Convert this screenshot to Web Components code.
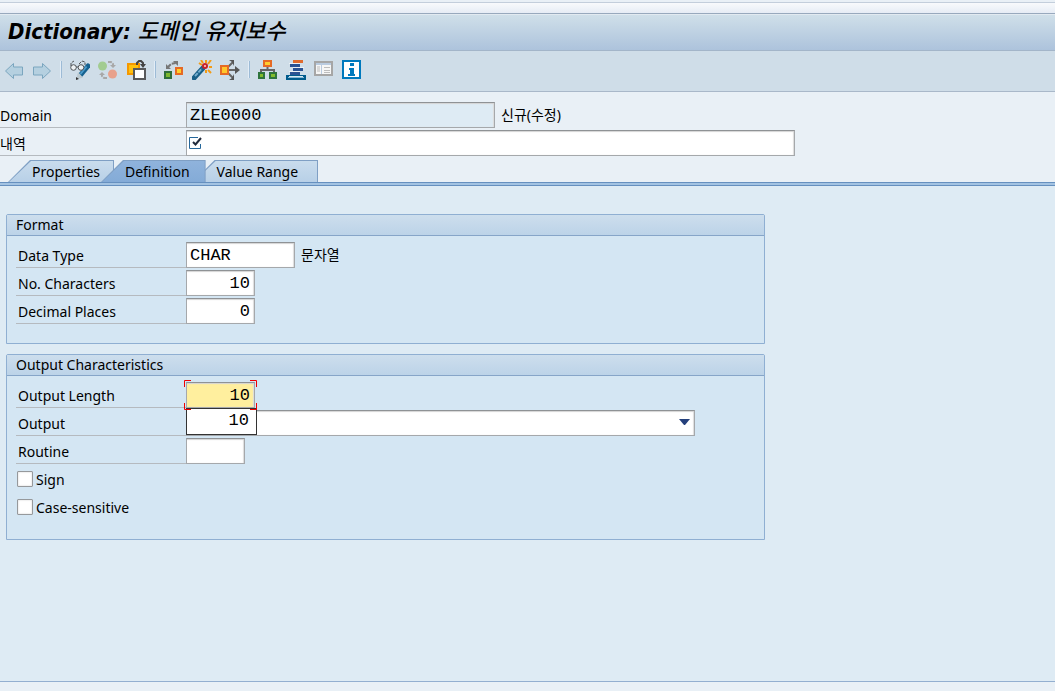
<!DOCTYPE html>
<html lang="ko">
<head>
<meta charset="utf-8">
<meta name="viewport" content="width=device-width, initial-scale=1">
<title>Dictionary: 도메인 유지보수</title>
<style>
  body {
    margin: 0;
    color: #000;
    font: 14px/20px "Noto Sans", "Noto Sans CJK KR", sans-serif;
  }
</style>
</head>
<body>
<app-window>
  <title-bar slot="top">Dictionary: <span>도메인 유지보수</span></title-bar>
  <tool-bar slot="top">
    <tool-button icon="back" label="Back" disabled></tool-button>
    <tool-button icon="forward" label="Forward" disabled></tool-button>
    <tool-separator></tool-separator>
    <tool-button icon="display" label="Display / Change"></tool-button>
    <tool-button icon="active" label="Active / Inactive" disabled></tool-button>
    <tool-button icon="other" label="Other Object"></tool-button>
    <tool-separator></tool-separator>
    <tool-button icon="check" label="Check"></tool-button>
    <tool-button icon="activate" label="Activate"></tool-button>
    <tool-button icon="where" label="Where-Used List"></tool-button>
    <tool-separator></tool-separator>
    <tool-button icon="tree" label="Display Object List"></tool-button>
    <tool-button icon="stack" label="Navigation Stack"></tool-button>
    <tool-button icon="table" label="Append"></tool-button>
    <tool-button icon="info" label="Help"></tool-button>
  </tool-bar>

  <form-head slot="top">
    <field-row label="Domain" value="ZLE0000" size="309" readonly note="신규(수정)"></field-row>
    <field-row label="내역" size="609" required></field-row>
  </form-head>
  <tab-strip slot="top">
    <tab-item style="--end: 14px">Properties</tab-item>
    <tab-item style="--end: 16px" selected>Definition</tab-item>
    <tab-item style="--end: 20px">Value Range</tab-item>
  </tab-strip>

  <group-box heading="Format">
    <field-row label="Data Type" value="CHAR" size="109" note="문자열"></field-row>
    <field-row label="No. Characters" value="10" size="69" numeric></field-row>
    <field-row label="Decimal Places" value="0" size="69" numeric></field-row>
  </group-box>
  <group-box heading="Output Characteristics">
    <field-row label="Output Length" value="10" size="69" numeric active suggest="10"></field-row>
    <field-row label="Output" size="509" dropdown></field-row>
    <field-row label="Routine" size="59"></field-row>
    <check-row label="Sign"></check-row>
    <check-row label="Case-sensitive"></check-row>
  </group-box>
</app-window>

<script>
const ICONS = {
  back: `<path d="M1.5 11 9.5 3.5V7H18.5V15H9.5V18.5Z" fill="#b5d0e0" stroke="#7ba6bf"/>`,
  forward: `<path d="M18.5 11 10.5 3.5V7H1.5V15H10.5V18.5Z" fill="#b5d0e0" stroke="#7ba6bf"/>`,
  display: `
    <path d="M18 6 10.500 15" stroke="#16618f" stroke-width="5" stroke-linecap="round"/>
    <path d="M16.500 6.500 10.500 14" stroke="#4a9aca" stroke-width="2"/>
    <path d="M8 12 6.500 19.500 13 17.500Z" fill="#bcc9d0"/><path d="M6 20V17L9 19Z" fill="#333"/>
    <g fill="#eef2f4" stroke="#4f5356"><circle cx="3.500" cy="7.500" r="2.800"/><circle cx="11" cy="7.500" r="2.800"/></g>
    <path d="M1 6V3L4 1M6 7H8M9 4 12 1 15 2V5" fill="none" stroke="#4f5356" stroke-dasharray="3 1"/>`,
  active: `
    <circle cx="4.500" cy="6" r="4.500" fill="#a2cc91"/><circle cx="14.500" cy="14" r="4.500" fill="#e8a18c"/>
    <g fill="none" stroke="#a8a8a8" stroke-width="2"><path d="M10 2H13L15 4V7M9 18H6L4 16V13" stroke-dasharray="4 1"/></g>
    <path d="M12 5H18L15 8ZM1 15H7L4 12Z" fill="#a8a8a8"/>`,
  other: `
    <rect x="2" y="4" width="11" height="10" fill="#ffc20f" stroke="#f59800" stroke-width="2"/>
    <rect x="8" y="9" width="11" height="10" fill="#fff" stroke="#58595b" stroke-width="2"/>
    <path d="M11 5V3L13 1H15L17 3V5" fill="none" stroke="#444" stroke-width="2"/>
    <path d="M14 4H20L17 8Z" fill="#444"/>`,
  check: `
    <rect x="1" y="12" width="6" height="6" fill="#7cb82f" stroke="#2f6e3b" stroke-width="2"/>
    <rect x="12" y="8" width="6" height="6" fill="#ffd02b" stroke="#e56a25" stroke-width="2"/>
    <path d="M4 7 7 4 12 3" fill="none" stroke="#777" stroke-width="2" stroke-dasharray="4 1"/>
    <path d="M2 4V9H7ZM9 1H14V6Z" fill="#777"/>`,
  activate: `
    <path d="M2 18 11 8" stroke="#185f87" stroke-width="5" stroke-linecap="round"/>
    <path d="M3 16 10 8.500" stroke="#75adce" stroke-width="2" stroke-dasharray="4 1"/>
    <path d="M9 0 11 3M14 0V3M19 0 16 4M17 7H20M16 10 19 13M7 3 10 5M14 10V13" stroke="#f39b16" stroke-width="2"/>
    <circle cx="13" cy="6" r="3" fill="#c8232c"/><path d="M12 5H14V7H12Z" fill="#f4aa9e"/>`,
  where: `
    <path d="M9 10H17M8 7 13 2M8 13 13 18" stroke="#666" stroke-width="2"/>
    <path d="M15 6 20 10 15 14ZM9 0H14V6L12 2ZM14 14V20H9L12 18Z" fill="#555"/>
    <rect x="1" y="6" width="7" height="8" fill="#ffc72b" stroke="#e56a25" stroke-width="2"/>`,
  tree: `
    <path d="M9.500 7V10M3 13V10H16V13" fill="none" stroke="#666" stroke-width="2"/>
    <rect x="6" y="1" width="7" height="5" fill="#ffce2e" stroke="#e56a25" stroke-width="2"/>
    <g fill="#82bc2c" stroke="#2f743d" stroke-width="2"><rect x="1" y="13" width="5" height="5"/><rect x="12" y="13" width="6" height="5"/></g>`,
  stack: `
    <path d="M7 0H17V3H7Z" fill="#e06a2c"/>
    <path d="M4 4H14V7H4ZM7 8H17V11H7ZM4 12H14V15H4Z" fill="#2a5293"/>
    <path d="M3 3H14V4H3ZM7 7H18V8H7ZM3 11H14V12H3Z" fill="#edf1f4"/>
    <rect x="1" y="16" width="18" height="3" fill="#86b9d7" stroke="#005b8c" stroke-width="2"/><path d="M3 16H17V17H3Z" fill="#d8e8f2"/>`,
  table: `
    <rect x="1" y="2" width="17" height="13" fill="#f6f6f6" stroke="#a6a6a6" stroke-width="2"/>
    <path d="M2 3H17V5H2ZM7 5H8V14H7Z" fill="#b9cbe0"/>
    <path d="M3 7H6M3 9H6M3 11H6M10 7.500H16M10 10.500H16M10 12.500H16" stroke="#bdbdbd"/>`,
  info: `
    <rect x="1" y="1" width="17" height="17" fill="#fff" stroke="#0079bd" stroke-width="2"/>
    <path d="M8 3H12V6H8ZM7 8H12V14H13V16H6V14H8V10H7Z" fill="#0079bd"/>`
};

const make = (host, html) => {
  host.attachShadow({ mode: 'open' }).innerHTML = html;
  return host.shadowRoot;
};

class AppWindow extends HTMLElement {
  constructor() {
    super();
    make(this, `
      <style>
        :host { display: flex; flex-direction: column; min-height: 100vh; background: #e9f0f6; }
        .strip { height: 10px; margin-top: 2px; border-top: 1px solid #c3cedb; border-bottom: 1px solid #98a9bd; background: linear-gradient(#f8fafc, #e6ecf5); flex: none; }
        main { flex: 1; display: flex; flex-direction: column; gap: 10px; padding: 28px 6px 0; background: #deebf4; }
        footer { height: 9px; border-top: 1px solid #93afd0; }
      </style>
      <div class="strip"></div>
      <slot name="top"></slot>
      <main><slot></slot></main>
      <footer></footer>
    `);
  }
}

class TitleBar extends HTMLElement {
  constructor() {
    super();
    make(this, `
      <style>
        :host { display: block; border-top: 1px solid #e2eaf1; border-bottom: 1px solid #a3b5c9; background: linear-gradient(#cfdfe9, #adc3dc); }
        h1 { height: 35px; margin: 0; padding: 0 8px; font: italic bold 22px/33px "DejaVu Sans Condensed", "Noto Sans", "Noto Sans CJK KR", sans-serif; white-space: nowrap; }
        ::slotted(span) { font-family: "Noto Sans CJK KR", sans-serif; font-weight: 500; line-height: 20px; }
      </style>
      <h1><slot></slot></h1>
    `);
  }
}

class ToolBar extends HTMLElement {
  constructor() {
    super();
    make(this, `
      <style>
        :host { display: flex; align-items: flex-start; gap: 8px; height: 31px; padding: 9px 4px 0; background: #cfdde8; border-bottom: 1px solid #a9b8c9; }
      </style>
      <slot></slot>
    `);
  }
}

class ToolSeparator extends HTMLElement {
  constructor() {
    super();
    make(this, `
      <style>
        :host { display: block; width: 1px; height: 17px; margin-top: 1px; border-left: 1px solid #e3edf6; background: #9dbbd6; }
      </style>
    `);
  }
}

class ToolButton extends HTMLElement {
  constructor() {
    super();
    const label = this.getAttribute('label');
    make(this, `
      <style>
        :host { display: block; }
        button { display: block; padding: 0; border: 0; background: none; }
        svg { display: block; width: 20px; height: 20px; }
      </style>
      <button type="button" aria-label="${label}" ${this.hasAttribute('disabled') ? 'disabled' : ''}>
        <svg viewBox="0 0 20 20" aria-hidden="true">${ICONS[this.getAttribute('icon')]}</svg>
      </button>
    `);
  }
}

class FormHead extends HTMLElement {
  constructor() {
    super();
    make(this, `
      <style>
        :host { display: flex; flex-direction: column; gap: 2px; padding: 10px 0 4px; --label-width: 186px; --label-indent: 0; }
      </style>
      <slot></slot>
    `);
  }
}

class FieldRow extends HTMLElement {
  constructor() {
    super();
    const has = name => this.hasAttribute(name);
    const value = this.getAttribute('value') || '';
    const note = this.getAttribute('note');
    const suggest = this.getAttribute('suggest');
    const control = has('dropdown')
      ? `<select id="field"><option></option></select>
         <svg class="arrow" viewBox="0 0 11 7" aria-hidden="true"><path d="M0 0H11L6 6H5Z" fill="#24407c"/></svg>`
      : `<input id="field" type="text" value="${value}" ${has('readonly') ? 'readonly' : ''} ${has('required') ? 'required' : ''}>`;

    make(this, `
      <style>
        :host { display: flex; align-items: flex-end; height: 26px; }
        label { box-sizing: border-box; flex: none; width: var(--label-width, 170px); height: 26px; padding: 4px 0 0 var(--label-indent, 2px); border-bottom: 1px solid #b5babf; white-space: nowrap; }
        .control { position: relative; flex: 0 1 ${this.getAttribute('size')}px; min-width: 0; height: 26px; }
        input, select {
          display: block;
          box-sizing: border-box;
          width: 100%;
          height: 26px;
          margin: 0;
          padding: 0 4px 0 3px;
          border: 1px solid #a5a8ab;
          border-top-color: #8f9295;
          border-radius: 0;
          outline: 0;
          appearance: none;
          background: #fff;
          box-shadow: inset 0 2px 1px -1px #d4d4d4, inset -1px 0 1px #dcdcdc;
          color: #000;
          font: 17px/24px "Liberation Mono", monospace;
        }
        input[readonly] { background: #deebf4; }
        :host([numeric]) input { text-align: right; }
        :host([active]) input { background: #ffef9e; }
        .arrow { position: absolute; right: 5px; top: 9px; width: 11px; height: 7px; }
        .must { position: absolute; left: 3px; top: 6px; width: 14px; height: 14px; }
        .note { padding-left: 6px; height: 26px; line-height: 26px; white-space: nowrap; }
        .focus { position: absolute; z-index: 3; left: -2px; top: -2px; width: 73px; height: 30px; pointer-events: none; }
        .list { position: absolute; z-index: 2; left: 0; top: 26px; width: calc(100% + 2px); box-sizing: border-box; border: 1px solid #333; background: #fff; }
        .list button { display: block; width: 100%; height: 25px; padding: 0 7px 2px; border: 0; background: none; color: #000; text-align: right; font: 17px/22px "Liberation Mono", monospace; }
      </style>
      <label for="field">${this.getAttribute('label')}</label>
      <div class="control">
        ${control}
        ${has('required') ? `<svg class="must" viewBox="0 0 14 14" aria-hidden="true">
          <path d="M9 1.500H.5V12.500H11.500V8" fill="none" stroke="#26679a"/>
          <path d="M4 6 6.500 8.500 12 2" fill="none" stroke="#222b3c" stroke-width="2"/></svg>` : ''}
        ${has('active') ? `<svg class="focus" viewBox="0 0 73 30" aria-hidden="true">
          <path d="M7 .5H.5V7M66 .5H72.500V7M.5 23V29.500H7M72.500 23V29.500H66" fill="none" stroke="#f00000"/></svg>` : ''}
        ${suggest ? `<div class="list"><button type="button">${suggest}</button></div>` : ''}
      </div>
      ${note ? `<span class="note">${note}</span>` : ''}
    `);
  }
}

class CheckRow extends HTMLElement {
  constructor() {
    super();
    make(this, `
      <style>
        :host { display: flex; align-items: center; height: 26px; }
        input { appearance: none; box-sizing: border-box; width: 16px; height: 16px; margin: 0 3px 0 1px; border: 1px solid #96999c; border-radius: 1px; background: #fff; box-shadow: inset 0 0 2px #ccc; }
        label { padding-top: 2px; }
      </style>
      <input id="box" type="checkbox">
      <label for="box">${this.getAttribute('label')}</label>
    `);
  }
}

class TabStrip extends HTMLElement {
  constructor() {
    super();
    make(this, `
      <style>
        :host { display: block; }
        .tabs { display: flex; padding-left: 21px; }
        .line { height: 2px; border: 1px solid #6690bf; border-width: 1px 0; background: #a3c3e2; }
      </style>
      <div class="tabs" role="tablist"><slot></slot></div>
      <div class="line"></div>
    `);
  }
}

class TabItem extends HTMLElement {
  constructor() {
    super();
    make(this, `
      <style>
        :host { display: block; position: relative; margin-left: -13px; --fill: linear-gradient(#c9dced, #b8d0e7); }
        :host([selected]) { z-index: 1; --fill: linear-gradient(#8fb3dc, #84abd7); }
        button { position: relative; isolation: isolate; display: block; height: 22px; padding: 2px var(--end) 0 24px; border: 0; background: none; color: inherit; font: inherit; white-space: nowrap; }
        button::before, button::after { content: ""; position: absolute; z-index: -1; inset: 0; background: #7f9fc4; clip-path: polygon(22px 0, 100% 0, 100% 100%, 0 100%); }
        button::after { inset: 1px 1px 0 1px; background: var(--fill); }
      </style>
      <button type="button" role="tab" aria-selected="${this.hasAttribute('selected')}"><slot></slot></button>
    `);
  }
}

class GroupBox extends HTMLElement {
  constructor() {
    super();
    make(this, `
      <style>
        :host { display: block; box-sizing: border-box; width: 100%; max-width: 759px; border: 1px solid #8fafd2; border-radius: 2px 2px 0 0; background: #d4e6f3; }
        h2 { margin: 0; padding: 0 9px; border-bottom: 1px solid #86a5c8; background: linear-gradient(#cddeed, #bcd3e8); font: inherit; }
        .rows { display: flex; flex-direction: column; gap: 2px; padding: 6px 9px 19px; }
      </style>
      <section>
        <h2>${this.getAttribute('heading')}</h2>
        <div class="rows"><slot></slot></div>
      </section>
    `);
  }
}

customElements.define('app-window', AppWindow);
customElements.define('title-bar', TitleBar);
customElements.define('tool-bar', ToolBar);
customElements.define('tool-separator', ToolSeparator);
customElements.define('tool-button', ToolButton);
customElements.define('form-head', FormHead);
customElements.define('field-row', FieldRow);
customElements.define('check-row', CheckRow);
customElements.define('tab-strip', TabStrip);
customElements.define('tab-item', TabItem);
customElements.define('group-box', GroupBox);
</script>
</body>
</html>
